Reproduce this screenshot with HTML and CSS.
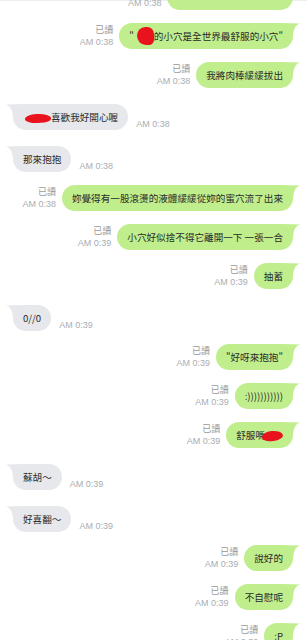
FILE: index.html
```html
<!DOCTYPE html>
<html lang="zh-Hant">
<head>
  <meta charset="UTF-8">
  <meta name="viewport" content="width=device-width, initial-scale=1.0">
  <title>Chat</title>
  <link rel="stylesheet" href="styles.css">
</head>
<body>
  <div class="chat">
    <div class="row out first">
      <div class="meta"><span class="read">已讀</span><span class="time">AM 0:38</span></div>
      <div class="bubble">好想一直抱著妳不放開了</div>
    </div>
    <div class="row out">
      <div class="meta"><span class="read">已讀</span><span class="time">AM 0:38</span></div>
      <div class="bubble">"<span class="blot blot-a"></span>的小穴是全世界最舒服的小穴"</div>
    </div>
    <div class="row out">
      <div class="meta"><span class="read">已讀</span><span class="time">AM 0:38</span></div>
      <div class="bubble">我將肉棒緩緩拔出</div>
    </div>
    <div class="row in">
      <div class="bubble"><span class="blot blot-b"></span>喜歡我好開心喔</div>
      <span class="time">AM 0:38</span>
    </div>
    <div class="row in">
      <div class="bubble">那來抱抱</div>
      <span class="time">AM 0:38</span>
    </div>
    <div class="row out">
      <div class="meta"><span class="read">已讀</span><span class="time">AM 0:38</span></div>
      <div class="bubble">妳覺得有一股滾燙的液體緩緩從妳的蜜穴流了出來</div>
    </div>
    <div class="row out">
      <div class="meta"><span class="read">已讀</span><span class="time">AM 0:39</span></div>
      <div class="bubble">小穴好似捨不得它離開一下 一張一合</div>
    </div>
    <div class="row out">
      <div class="meta"><span class="read">已讀</span><span class="time">AM 0:39</span></div>
      <div class="bubble">抽蓄</div>
    </div>
    <div class="row in">
      <div class="bubble">0//0</div>
      <span class="time">AM 0:39</span>
    </div>
    <div class="row out">
      <div class="meta"><span class="read">已讀</span><span class="time">AM 0:39</span></div>
      <div class="bubble">"好呀來抱抱"</div>
    </div>
    <div class="row out">
      <div class="meta"><span class="read">已讀</span><span class="time">AM 0:39</span></div>
      <div class="bubble">:)))))))))))</div>
    </div>
    <div class="row out">
      <div class="meta"><span class="read">已讀</span><span class="time">AM 0:39</span></div>
      <div class="bubble">舒服嗎<span class="blot blot-c"></span></div>
    </div>
    <div class="row in">
      <div class="bubble">蘇胡～</div>
      <span class="time">AM 0:39</span>
    </div>
    <div class="row in">
      <div class="bubble">好喜翻～</div>
      <span class="time">AM 0:39</span>
    </div>
    <div class="row out">
      <div class="meta"><span class="read">已讀</span><span class="time">AM 0:39</span></div>
      <div class="bubble">說好的</div>
    </div>
    <div class="row out">
      <div class="meta"><span class="read">已讀</span><span class="time">AM 0:39</span></div>
      <div class="bubble">不自慰呢</div>
    </div>
    <div class="row out">
      <div class="meta"><span class="read">已讀</span><span class="time">AM 0:39</span></div>
      <div class="bubble">:P</div>
    </div>
  </div>
</body>
</html>
```

FILE: styles.css
```css
* {
  margin: 0;
  padding: 0;
  box-sizing: border-box;
}
html, body {
  height: 100%;
  overflow: hidden;
}
body {
  background: #ffffff;
  font-family: "Noto Sans CJK TC", sans-serif;
  color: #2b2b2b;
}
.chat {
  border-top: 1px solid #ededed;
  display: flex;
  flex-direction: column;
}
.row {
  display: flex;
  align-items: flex-end;
}
.row.out {
  justify-content: flex-end;
  padding-right: 14px;
  margin-top: 13px;
}
.row.out.first {
  margin-top: -17px;
}
.row.in {
  padding-left: 13px;
  margin-top: 16px;
}
.bubble {
  position: relative;
  z-index: 0;
  height: 26px;
  line-height: 26px;
  padding: 0 10px;
  border-radius: 13px;
  font-size: 9.6px;
  white-space: nowrap;
}
.first .bubble {
  line-height: 22px;
}
.out .bubble {
  background: #c0ee8c;
}
.in .bubble {
  background: #e6e8eb;
}
.bubble::after {
  content: "";
  position: absolute;
  z-index: -1;
  top: 0;
  width: 20px;
  height: 12px;
  background: inherit;
}
.out .bubble::after {
  right: -7px;
  clip-path: path("M0 0 L20 0.6 Q14 2 13 12 L0 12 Z");
}
.in .bubble::after {
  left: -7px;
  clip-path: path("M20 0 L0 0.6 Q6 2 7 12 L20 12 Z");
}
.meta {
  display: flex;
  flex-direction: column;
  align-items: flex-end;
  margin-right: 6px;
  margin-bottom: 1px;
  font-family: "Liberation Sans", "Noto Sans CJK TC", sans-serif;
  font-size: 9px;
  line-height: 12px;
}
.read {
  color: #9a9a9a;
}
.time {
  color: #a9adb2;
  font-family: "Liberation Sans", sans-serif;
  font-size: 9px;
  line-height: 12px;
}
.in .time {
  margin-left: 8px;
}
.blot {
  display: inline-block;
  vertical-align: middle;
  background: #e8131d;
}
.blot-a {
  width: 17px;
  height: 18px;
  margin: -2px 0 0 3px;
  border-radius: 55% 45% 35% 60%;
}
.blot-b {
  width: 26px;
  height: 9px;
  margin-left: 2px;
  border-radius: 50% 60% 45% 55%;
  transform: rotate(-3deg);
}
.blot-c {
  width: 21px;
  height: 10px;
  margin-left: -3px;
  border-radius: 50% 55% 50% 45%;
  transform: rotate(-6deg);
}
```
